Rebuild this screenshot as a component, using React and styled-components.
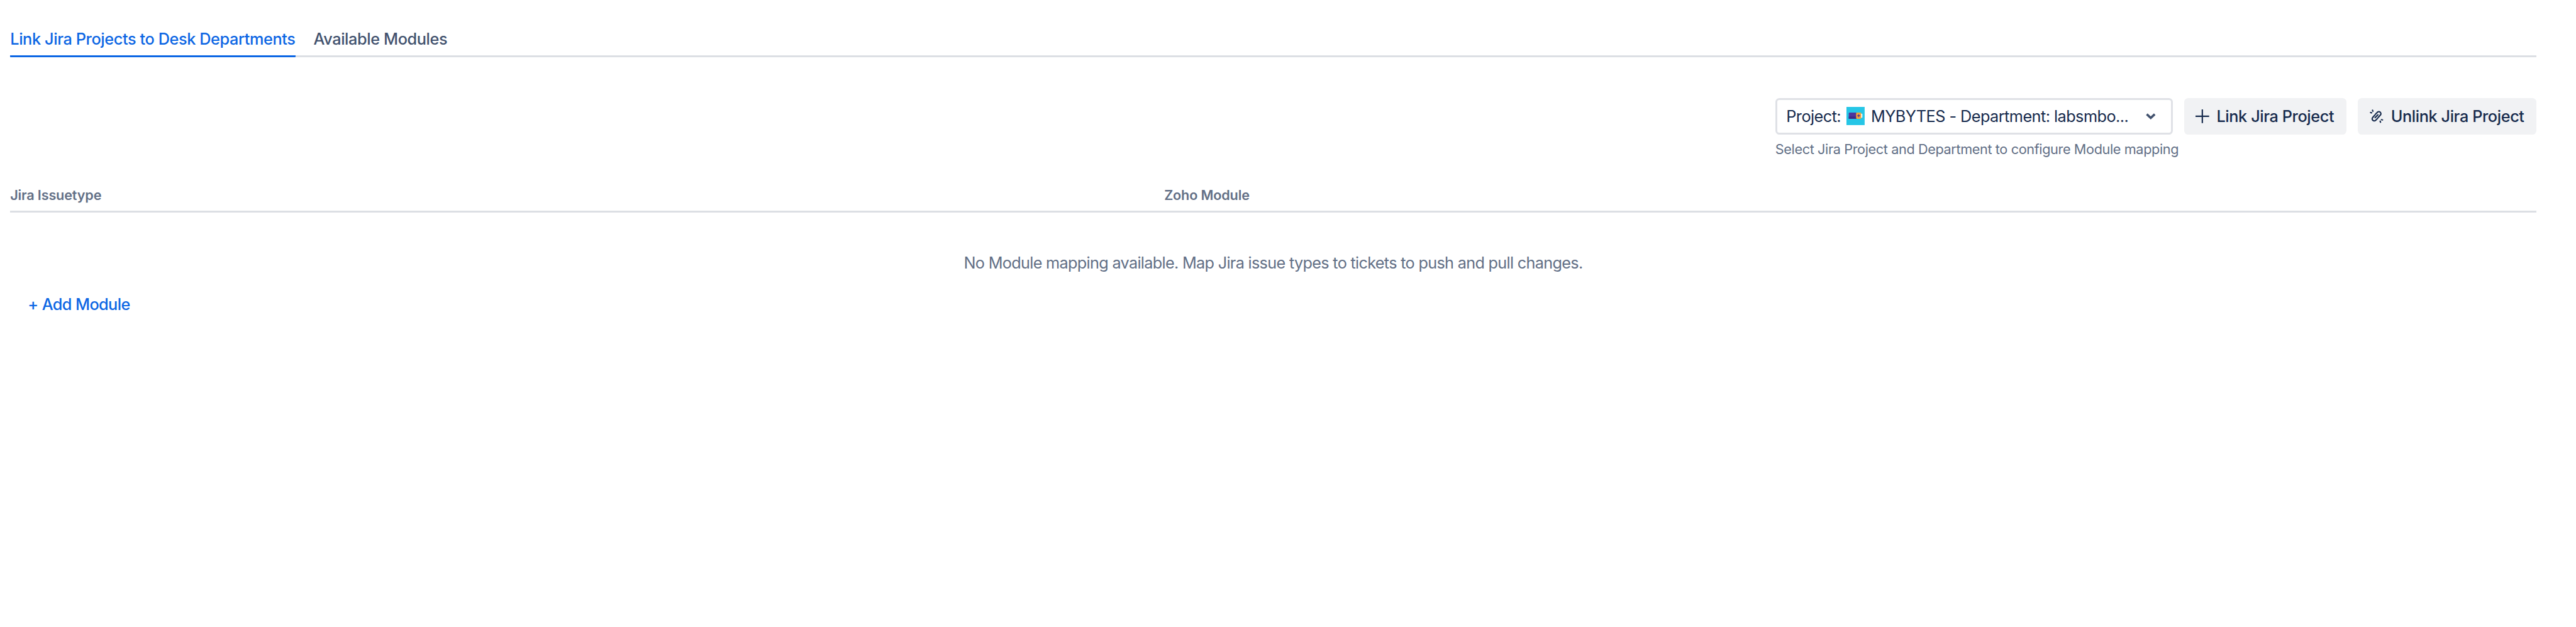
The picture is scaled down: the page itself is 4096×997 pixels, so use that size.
import React from "react";
import styled, { createGlobalStyle } from "styled-components";

const u = (n) => `${n * 0.903}px`;

const GlobalStyle = createGlobalStyle`
  html, body {
    margin: 0;
    padding: 0;
    background: #fff;
  }
  body {
    font-family: Inter, "Liberation Sans", sans-serif;
    color: #172b4d;
  }
`;

const Page = styled.div`
  padding: ${u(36)} ${u(70)} 0 ${u(18)};
  min-height: 100vh;
  box-sizing: border-box;
`;

const TabList = styled.div`
  display: flex;
  gap: ${u(32)};
  border-bottom: ${u(4)} solid #dcdfe4;
`;

const Tab = styled.div`
  height: ${u(62)};
  margin-bottom: ${u(-4)};
  border-bottom: ${u(4)} solid ${({ $active }) => ($active ? "#0c66e4" : "transparent")};
  border-radius: 1px;
  color: ${({ $active }) => ($active ? "#0c66e4" : "#42526e")};
  font-size: ${u(28)};
  font-weight: 500;
  letter-spacing: -0.39px;
  line-height: ${u(66)};
  white-space: nowrap;
`;

const Toolbar = styled.div`
  display: flex;
  justify-content: flex-end;
  gap: ${u(20)};
  margin-top: ${u(72)};
`;

const SelectColumn = styled.div`
  display: flex;
  flex-direction: column;
  width: ${u(700)};
`;

const Select = styled.div`
  display: flex;
  align-items: center;
  height: ${u(64)};
  box-sizing: border-box;
  padding: 0 ${u(24)} 0 ${u(16)};
  border: ${u(4)} solid #dfe1e6;
  border-radius: ${u(7)};
  background: #fff;
  font-size: ${u(28)};
  letter-spacing: -0.55px;
  white-space: nowrap;
`;

const SelectValue = styled.span`
  display: flex;
  align-items: center;
  flex: 1;
  min-width: 0;
`;

const ProjectIcon = styled.svg`
  flex: none;
  width: ${u(32)};
  height: ${u(32)};
  margin: 0 ${u(11)} 0 ${u(10)};
`;

const Chevron = styled.svg`
  flex: none;
  width: ${u(24)};
  height: ${u(24)};
`;

const Helper = styled.div`
  margin-top: ${u(10)};
  color: #626f86;
  font-size: ${u(24)};
  letter-spacing: -0.38px;
  line-height: ${u(32)};
  white-space: nowrap;
`;

const Button = styled.button`
  display: flex;
  align-items: center;
  gap: ${({ $gap }) => u($gap)};
  width: ${({ $width }) => u($width)};
  height: ${u(64)};
  box-sizing: border-box;
  padding: 0 0 0 ${({ $pad }) => u($pad)};
  border: 0;
  border-radius: ${u(7)};
  background: #f1f2f4;
  color: #172b4d;
  font-family: inherit;
  font-size: ${u(28)};
  font-weight: 500;
  letter-spacing: -0.4px;
  white-space: nowrap;
`;

const ButtonIcon = styled.svg`
  flex: none;
  width: ${({ $size }) => u($size)};
  height: ${({ $size }) => u($size)};
`;

const TableHead = styled.div`
  display: grid;
  grid-template-columns: ${u(2032)} 1fr;
  margin-top: ${u(49)};
  padding-bottom: ${u(11)};
  border-bottom: ${u(4)} solid #dcdfe4;
  color: #626f86;
  font-size: ${u(24)};
  font-weight: 600;
  letter-spacing: -0.18px;
  line-height: ${u(32)};
`;

const EmptyText = styled.div`
  margin-top: ${u(71)};
  color: #626f86;
  font-size: ${u(28)};
  letter-spacing: -0.7px;
  line-height: ${u(36)};
  text-align: center;
`;

const AddModule = styled.div`
  margin: ${u(37)} 0 0 ${u(31)};
  color: #0c66e4;
  font-size: ${u(28)};
  font-weight: 500;
  letter-spacing: -0.6px;
  line-height: ${u(36)};
`;

const App = () => {
  return (
    <Page>
      <GlobalStyle />
      <TabList>
        <Tab $active>Link Jira Projects to Desk Departments</Tab>
        <Tab>Available Modules</Tab>
      </TabList>

      <Toolbar>
        <SelectColumn>
          <Select>
            <SelectValue>
              Project:
              <ProjectIcon viewBox="0 0 32 32">
                <rect width="32" height="32" fill="#26c6e6" />
                <rect x="25" y="12" width="3" height="7" rx="1" fill="#fff" />
                <rect x="4" y="10" width="14" height="11" rx="1.5" fill="#4f379b" />
                <rect x="4" y="17" width="14" height="4" fill="#3d2a86" />
                <rect x="17" y="10" width="9" height="11" rx="1.5" fill="#f5a53a" />
                <path d="M21.5 13v5M19 15.5h5" stroke="#4f379b" strokeWidth="1.4" />
              </ProjectIcon>
              MYBYTES - Department: labsmbo...
            </SelectValue>
            <Chevron viewBox="0 0 24 24" fill="none">
              <path d="M5 8.5l7 6.5 7-6.5" stroke="#42526e" strokeWidth="4" />
            </Chevron>
          </Select>
          <Helper>Select Jira Project and Department to configure Module mapping</Helper>
        </SelectColumn>

        <Button $width={286} $pad={20} $gap={13}>
          <ButtonIcon $size={24} viewBox="0 0 24 24" fill="none">
            <path d="M12 0v24M0 12h24" stroke="#172b4d" strokeWidth="2.4" />
          </ButtonIcon>
          Link Jira Project
        </Button>

        <Button $width={314} $pad={21} $gap={13}>
          <ButtonIcon $size={24} viewBox="0 0 24 24" fill="none" stroke="#172b4d" strokeWidth="2.4" strokeLinecap="round">
            <path d="M10 8.5l3.5-3.5a3.5 3.5 0 0 1 5.2 5l-3.7 4" />
            <path d="M14 15.5l-3.5 3.5a3.5 3.5 0 0 1-5.2-5l3.7-4" />
            <path d="M14.5 9.5l-5 5" />
            <path d="M5 1.5l.6 1.8M1.5 5.5l1.8.5M19 22.5l-.6-1.8M22.5 18.5l-1.8-.5" />
          </ButtonIcon>
          Unlink Jira Project
        </Button>
      </Toolbar>

      <TableHead>
        <span>Jira Issuetype</span>
        <span>Zoho Module</span>
      </TableHead>

      <EmptyText>No Module mapping available. Map Jira issue types to tickets to push and pull changes.</EmptyText>
      <AddModule>+ Add Module</AddModule>
    </Page>
  );
};

export default App;
